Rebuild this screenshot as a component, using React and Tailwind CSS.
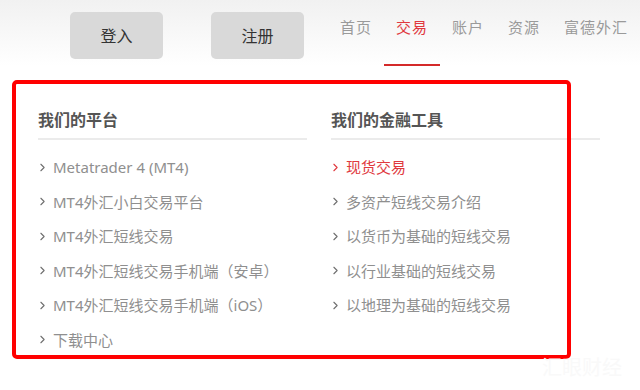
import { ChevronRight } from "lucide-react";

const platforms = [
  "Metatrader 4 (MT4)",
  "MT4外汇小白交易平台",
  "MT4外汇短线交易",
  "MT4外汇短线交易手机端（安卓）",
  "MT4外汇短线交易手机端（iOS）",
  "下载中心",
];

const tools = [
  "现货交易",
  "多资产短线交易介绍",
  "以货币为基础的短线交易",
  "以行业基础的短线交易",
  "以地理为基础的短线交易",
];

const nav = ["首页", "交易", "账户", "资源", "富德外汇"];

function Column({ title, items, active, width }) {
  return (
    <div className={width}>
      <h3 className="font-bold text-[16px] text-[#555] leading-[22px] pt-[43px] pb-[7px] border-b-2 border-[#ebebeb]">
        {title}
      </h3>
      <ul className="pt-[10px]">
        {items.map((t, i) => (
          <li
            key={t}
            className={
              "flex items-center h-[34.5px] text-[15px] " +
              (i === active ? "text-[#e0393e]" : "text-[#8f8f8f]")
            }
          >
            <ChevronRight
              size={13}
              strokeWidth={2}
              className={"mr-[4px] -ml-[2px] shrink-0 " + (i === active ? "text-[#e0393e]" : "text-[#6f6f6f]")}
            />
            <span className="whitespace-nowrap">{t}</span>
          </li>
        ))}
      </ul>
    </div>
  );
}

export default function App() {
  return (
    <div className="relative w-[640px] h-[390px] bg-white overflow-hidden font-['Noto_Sans','Noto_Sans_CJK_SC',sans-serif]">
      <header className="h-[66px] flex items-start bg-gradient-to-b from-[#f1f1f1] to-white">
        <div className="flex shrink-0 gap-[48px] pl-[70px] pt-[12px]">
          <button className="w-[93px] h-[47px] rounded-[5px] bg-[#d9d9d9] text-[16px] text-[#333]">登入</button>
          <button className="w-[93px] h-[47px] rounded-[5px] bg-[#d9d9d9] text-[16px] text-[#333]">注册</button>
        </div>
        <nav className="flex shrink-0 ml-[24px] h-full">
          {nav.map((n, i) => (
            <div
              key={n}
              className={
                "px-3 pt-[16px] text-[15px] tracking-[1px] h-full whitespace-nowrap shrink-0 " +
                (i === 1 ? "text-[#e0393e] border-b-2 border-[#d42a2a]" : "text-[#9a9a9a]")
              }
            >
              {n}
            </div>
          ))}
        </nav>
      </header>

      <div className="flex pl-[38px] gap-[24px]">
        <Column title="我们的平台" items={platforms} active={-1} width="w-[269px]" />
        <Column title="我们的金融工具" items={tools} active={0} width="w-[269px]" />
      </div>

      <div className="absolute left-[12px] top-[80px] w-[559px] h-[279px] border-4 border-[#ff0000] rounded-[5px] pointer-events-none" />
      <div className="absolute left-[542px] top-[353px] text-[20px] text-[#f9f9f9]">汇眼财经</div>
    </div>
  );
}
